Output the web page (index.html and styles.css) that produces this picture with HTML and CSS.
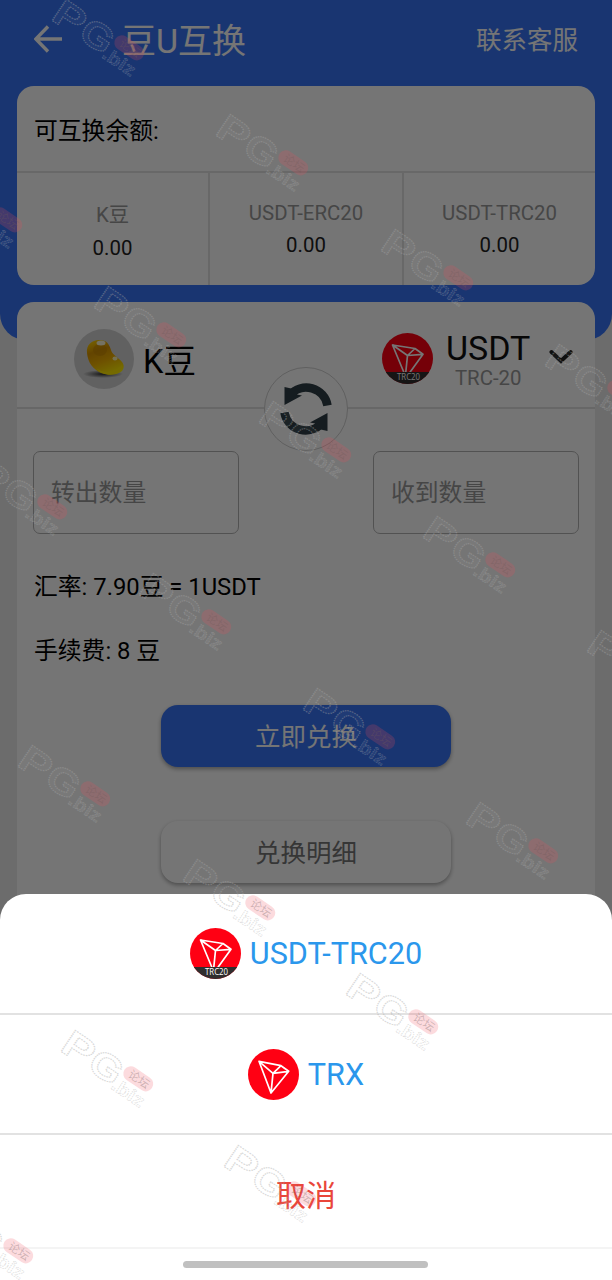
FILE: index.html
```html
<!DOCTYPE html>
<html lang="zh-CN">
<head>
<meta charset="utf-8">
<title>豆U互换</title>
<link rel="stylesheet" href="styles.css">
</head>
<body>
<svg class="defs" width="0" height="0" aria-hidden="true">
  <defs>
    <symbol id="tron" viewBox="0 0 51 51">
      <circle cx="25.5" cy="25.5" r="25.5" fill="#ff0013"/>
      <path d="M11 12.3 33 16.7 40.7 22.3 23 44ZM11 12.3 25 24.3 33 16.7M25 24.3 40.7 22.3M25 24.3 23 44" fill="none" stroke="#fff" stroke-width="1.7" stroke-linejoin="round"/>
    </symbol>
    <symbol id="tron20" viewBox="0 0 51 51">
      <clipPath id="disc"><circle cx="25.5" cy="25.5" r="25.5"/></clipPath>
      <g clip-path="url(#disc)">
        <rect width="51" height="51" fill="#ff0013"/>
        <path d="M10.5 12 33 15.5 41 21.3 26 42 23 42ZM10.5 12 25.5 22.5 33 15.5M25.5 22.5 41 21.3M25.5 22.5 23.500 42" fill="none" stroke="#fff" stroke-width="1.7" stroke-linejoin="round"/>
        <rect y="39" width="51" height="12" fill="#302e2e"/>
        <text x="26.5" y="46.9" class="tron-label" textLength="23" lengthAdjust="spacingAndGlyphs">TRC20</text>
      </g>
    </symbol>
    <g id="mark">
      <g transform="rotate(34)">
        <text x="-3" y="27" class="mark-letter" textLength="32" lengthAdjust="spacingAndGlyphs">P</text>
        <text x="30" y="27" class="mark-letter" textLength="33" lengthAdjust="spacingAndGlyphs">G</text>
        <text x="61" y="30" class="mark-biz" textLength="36" lengthAdjust="spacingAndGlyphs">.biz</text>
        <rect x="63" y="-1" width="33" height="15" rx="7.5" fill="#f24a5c" fill-opacity=".2"/>
        <text x="69" y="10.500" class="mark-forum">论坛</text>
      </g>
    </g>
  </defs>
</svg>
<div class="screen">
  <div class="hero"></div>
  <main class="page">
    <header class="bar">
      <svg class="back" viewBox="0 0 28 28"><path d="M28 14H2M14 1.5 1.8 14 14 26.5" fill="none" stroke="#fff" stroke-width="3.4"/></svg>
      <h1 class="title">豆U互换</h1>
      <a class="service">联系客服</a>
    </header>
    <section class="card balances">
      <div class="balances-title">可互换余额:</div>
      <div class="balance-row">
        <div class="balance"><span class="coin coin-cjk">K豆</span><span class="amount">0.00</span></div>
        <div class="balance"><span class="coin">USDT-ERC20</span><span class="amount">0.00</span></div>
        <div class="balance"><span class="coin">USDT-TRC20</span><span class="amount">0.00</span></div>
      </div>
    </section>
    <section class="card exchange">
      <div class="pair">
        <div class="from">
          <svg class="bean" viewBox="0 0 60 60">
            <defs>
              <linearGradient id="gold" x1=".2" y1="0" x2=".6" y2="1"><stop offset="0" stop-color="#ffd000"/><stop offset=".3" stop-color="#d99500"/><stop offset=".6" stop-color="#efb000"/><stop offset="1" stop-color="#fff000"/></linearGradient>
              <radialGradient id="shade"><stop offset="0" stop-color="#333"/><stop offset="1" stop-color="#333" stop-opacity="0"/></radialGradient>
            </defs>
            <circle cx="30" cy="30" r="30" fill="#d4d4d4"/>
            <ellipse cx="29" cy="45" rx="20" ry="4" fill="url(#shade)"/>
            <path d="M13 24C12 16 18 11 25 11C33 11 35 15 37 21C38 25 41 26 45 30C50 34 51 38 48 42C44 46 35 47 27 44C19 40 14 34 13 24Z" fill="url(#gold)"/>
            <path d="M20 37C26 44 38 46 48 36C49 45 35 48 26 43Z" fill="#ffe600"/>
            <ellipse cx="26" cy="21" rx="7" ry="6" fill="#c98a00" fill-opacity=".6"/>
            <ellipse cx="27" cy="14" rx="4.5" ry="2.500" fill="#fff8d8"/>
            <ellipse cx="41" cy="29.500" rx="2.500" ry="2" fill="#fff3b0"/>
          </svg>
          <span class="from-name">K豆</span>
        </div>
        <div class="to">
          <svg class="logo"><use href="#tron20"/></svg>
          <div class="to-text"><span class="to-name">USDT</span><span class="to-chain">TRC-20</span></div>
          <svg class="chevron" viewBox="0 0 24 16"><path d="M2.500 3 12 12 21.500 3" fill="none" stroke="#222" stroke-width="4" stroke-linecap="round"/></svg>
        </div>
        <div class="swap">
          <svg viewBox="-27 -27 54 54" width="54" height="54"><g id="half"><path d="M-16-14A21.5 21.5 0 0 1 21.5-3.500" fill="none" stroke="#2f3e46" stroke-width="8.5"/><path d="M-21.500-22V-4L-4-13.500-9-14.500-8-19Z" fill="#2f3e46"/></g><use href="#half" transform="rotate(180)"/></svg>
        </div>
      </div>
      <div class="fields">
        <div class="field">转出数量</div>
        <div class="field">收到数量</div>
      </div>
      <p class="info rate">汇率: 7.90豆 = 1USDT</p>
      <p class="info">手续费: 8 豆</p>
      <div class="button primary">立即兑换</div>
      <div class="button plain">兑换明细</div>
    </section>
  </main>
  <div class="scrim"></div>
  <div class="sheet">
    <div class="option"><svg class="logo"><use href="#tron20"/></svg><span>USDT-TRC20</span></div>
    <div class="option second"><svg class="logo"><use href="#tron"/></svg><span>TRX</span></div>
    <div class="option cancel">取消</div>
    <div class="home"><i></i></div>
  </div>
  <svg class="marks" viewBox="0 0 612 1280">
    <use href="#mark" x="67" y="-2"/><use href="#mark" x="231" y="113"/><use href="#mark" x="396" y="228"/><use href="#mark" x="560" y="343"/>
    <use href="#mark" x="-55" y="170"/><use href="#mark" x="109" y="285"/><use href="#mark" x="274" y="400"/><use href="#mark" x="438" y="515"/><use href="#mark" x="602" y="629"/>
    <use href="#mark" x="-10" y="457"/><use href="#mark" x="154" y="572"/><use href="#mark" x="318" y="687"/><use href="#mark" x="481" y="801"/>
    <use href="#mark" x="33" y="744"/><use href="#mark" x="198" y="858"/><use href="#mark" x="361" y="972"/>
    <use href="#mark" x="76" y="1029"/><use href="#mark" x="239" y="1144"/><use href="#mark" x="-44" y="1201"/>
  </svg>
</div>
</body>
</html>
```
FILE: styles.css
```css
* { box-sizing: border-box; }
body {
  margin: 0;
  font-family: Roboto, "Noto Sans CJK SC", sans-serif;
  color: #000;
}
.defs { position: absolute; }
.screen {
  position: relative;
  width: 612px;
  height: 1280px;
  overflow: hidden;
  background: #ececec;
}
.hero {
  position: absolute;
  inset: 0 0 auto;
  height: 340px;
  background: #3875f6;
  border-radius: 0 0 26px 26px;
}
.page {
  position: relative;
  display: flex;
  flex-direction: column;
  padding: 0 17px;
}
.bar {
  display: flex;
  align-items: center;
  height: 86px;
  padding: 0 17px 8px;
  color: #fff;
}
.back { width: 28px; height: 28px; }
.title {
  margin: 3px 0 0 60px;
  font-size: 34px;
  line-height: 50px;
  font-weight: 400;
}
.service {
  margin: 2px 0 0 auto;
  font-size: 25.5px;
  line-height: 38px;
}
.card {
  background: #fff;
  border-radius: 17px;
}
.balances {
  display: flex;
  flex-direction: column;
  height: 199px;
}
.balances-title {
  height: 87px;
  padding-left: 17px;
  font-size: 23.8px;
  line-height: 90px;
  border-bottom: 2px solid #e3e3e3;
}
.balance-row {
  flex: 1;
  display: grid;
  grid-template-columns: 193px 194px 1fr;
}
.balance {
  display: flex;
  flex-direction: column;
  align-items: center;
  padding-top: 24px;
  border-right: 2px solid #e3e3e3;
}
.balance:last-child { border-right: 0; }
.coin {
  height: 32px;
  font-size: 20.4px;
  line-height: 32px;
  color: #999;
}
.coin-cjk { height: 35px; line-height: 37px; }
.amount {
  font-size: 20.4px;
  line-height: 32px;
  color: #222;
}
.exchange {
  margin-top: 17px;
  height: 640px;
}
.pair {
  position: relative;
  display: flex;
  height: 107px;
  padding-left: 57px;
  border-bottom: 2px solid #e0e0e0;
}
.from {
  display: flex;
  align-items: center;
  width: 308px;
  height: 113px;
}
.bean { width: 60px; height: 60px; }
.from-name {
  margin: 7px 0 0 9px;
  font-size: 32.5px;
  line-height: 48px;
}
.to {
  display: flex;
  align-items: center;
  height: 113px;
}
.logo { width: 51px; height: 51px; }
.to-text {
  display: flex;
  flex-direction: column;
  align-items: center;
  margin: 2px 0 0 13px;
}
.to-name { font-size: 34px; line-height: 36px; color: #111; }
.to-chain { font-size: 20.4px; line-height: 24px; color: #999; }
.chevron { width: 24px; height: 16px; margin: -3px 0 0 19px; }
.swap {
  position: absolute;
  left: 247px;
  top: 65px;
  width: 84px;
  height: 84px;
  display: grid;
  place-items: center;
  background: #fff;
  border: 1.5px solid #d0d0d0;
  border-radius: 50%;
}
.fields {
  display: flex;
  justify-content: space-between;
  padding: 42px 16px 0;
}
.field {
  width: 206px;
  height: 83px;
  padding-left: 17px;
  font-size: 23.8px;
  line-height: 82px;
  color: #999;
  border: 1px solid #b4b4b4;
  border-radius: 7px;
}
.info {
  margin: 0;
  padding-left: 17px;
  font-size: 23.8px;
  line-height: 36px;
}
.rate { margin: 35px 0 28px; }
.button {
  width: 290px;
  height: 62px;
  margin: 0 auto;
  border-radius: 17px;
  font-size: 25.5px;
  line-height: 64px;
  text-align: center;
  box-shadow: 0 2px 4px rgba(0, 0, 0, .35);
}
.primary {
  margin-top: 36px;
  color: #fff;
  background: #3875f6;
}
.plain {
  margin-top: 54px;
  color: #777;
  background: #fff;
}
.scrim {
  position: absolute;
  inset: 0;
  background: rgba(0, 0, 0, .54);
}
.sheet {
  position: absolute;
  inset: 894px 0 0;
  background: #fff;
  border-radius: 26px 26px 0 0;
}
.option {
  display: flex;
  align-items: center;
  justify-content: center;
  gap: 9px;
  height: 121px;
  border-bottom: 2px solid #e2e2e2;
  color: #2b97ec;
  font-size: 30.6px;
}
.option.second { height: 120px; }
.option.cancel {
  height: 114px;
  color: #e9463a;
  border-color: #f4f4f4;
  font-size: 30px;
  padding-top: 4px;
}
.home {
  display: flex;
  justify-content: center;
  padding: 12px 1px 0 0;
}
.home i {
  width: 245px;
  height: 7px;
  border-radius: 4px;
  background: #c0c0c0;
}
.marks {
  position: absolute;
  inset: 0;
  width: 612px;
  height: 1280px;
  pointer-events: none;
}
.tron-label {
  font: 8.2px "Open Sans", sans-serif;
  fill: #fff;
  text-anchor: middle;
}
.mark-letter {
  font: 700 37px "Liberation Sans", sans-serif;
  fill: rgba(255, 255, 255, .04);
  stroke: rgba(165, 165, 165, .42);
  stroke-width: 1.2px;
  stroke-dasharray: 1.4 .8;
}
.mark-biz {
  font: 700 18px "Liberation Sans", sans-serif;
  fill: rgba(255, 255, 255, .08);
  stroke: rgba(165, 165, 165, .35);
  stroke-width: .8px;
  stroke-dasharray: 1.4 .8;
}
.mark-forum {
  font: 11.5px "Noto Sans CJK SC", sans-serif;
  fill: rgba(110, 90, 90, .32);
}
```
